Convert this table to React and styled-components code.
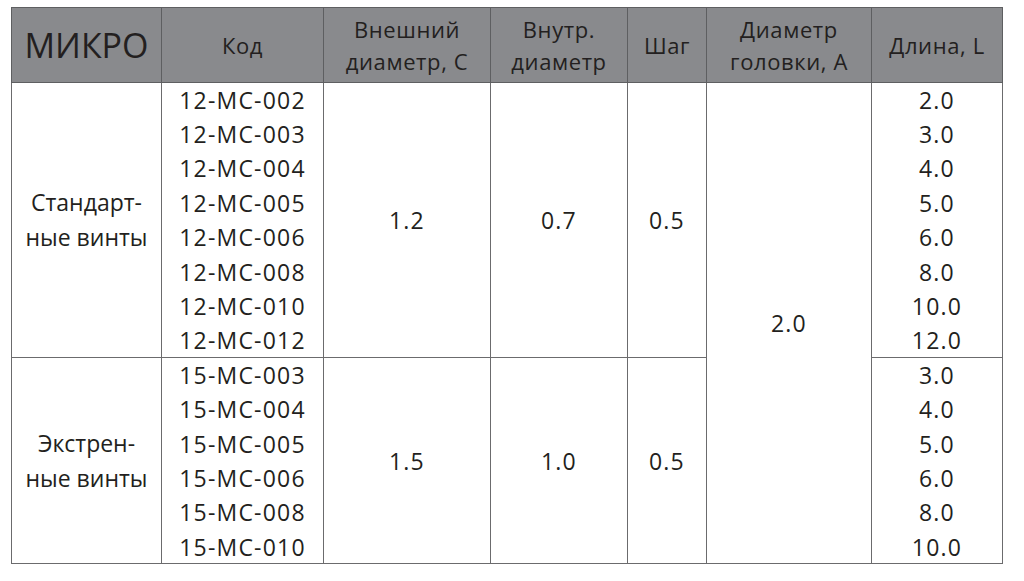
import React from 'react';
import styled, { createGlobalStyle, css } from 'styled-components';

const GlobalStyle = createGlobalStyle`
  html, body {
    margin: 0;
    padding: 0;
    background: #ffffff;
  }
  body {
    font-family: "Open Sans", "Liberation Sans", sans-serif;
    color: #231f20;
  }
`;

const Page = styled.div`
  padding: 7px 0 0 11px;
`;

const Table = styled.table`
  border-collapse: collapse;
  table-layout: fixed;
  width: 991px;
  border: 1.5px solid #6b6b6d;
`;

const HeadCell = styled.th`
  height: 74px;
  padding: 0;
  background: #898a8d;
  border: 1.2px solid #5e5f61;
  font-weight: 400;
  font-size: 22px;
  letter-spacing: 0.6px;
  line-height: 32px;
  text-align: center;
  vertical-align: middle;
  color: #231f20;
  ${(p) =>
    p.big &&
    css`
      font-size: 34px;
      letter-spacing: 0;
      line-height: 36px;
    `}
`;

const Row = styled.tr`
  height: 34.4px;
`;

const Cell = styled.td`
  padding: 0;
  font-size: 23px;
  letter-spacing: ${(p) => (p.text ? '0' : '1.2px')};
  line-height: ${(p) => (p.text ? '35px' : '28px')};
  text-align: center;
  vertical-align: middle;
  border-left: 1.2px solid #6b6b6d;
  border-right: 1.2px solid #6b6b6d;
  ${(p) =>
    p.top &&
    css`
      border-top: 1.2px solid #6b6b6d;
    `}
`;

const columns = [150, 162, 167, 137, 79, 165, 131];

const groups = [
  {
    label: ['Стандарт-', 'ные винты'],
    outer: '1.2',
    inner: '0.7',
    pitch: '0.5',
    codes: ['002', '003', '004', '005', '006', '008', '010', '012'],
    prefix: '12-MC-',
  },
  {
    label: ['Экстрен-', 'ные винты'],
    outer: '1.5',
    inner: '1.0',
    pitch: '0.5',
    codes: ['003', '004', '005', '006', '008', '010'],
    prefix: '15-MC-',
  },
];

const totalRows = groups.reduce((n, g) => n + g.codes.length, 0);

const App = () => (
  <>
    <GlobalStyle />
    <Page>
      <Table>
        <colgroup>
          {columns.map((w, i) => (
            <col key={i} style={{ width: w }} />
          ))}
        </colgroup>
        <thead>
          <tr>
            <HeadCell big>МИКРО</HeadCell>
            <HeadCell>Код</HeadCell>
            <HeadCell>
              Внешний
              <br />
              диаметр, C
            </HeadCell>
            <HeadCell>
              Внутр.
              <br />
              диаметр
            </HeadCell>
            <HeadCell>Шаг</HeadCell>
            <HeadCell>
              Диаметр
              <br />
              головки, A
            </HeadCell>
            <HeadCell>Длина, L</HeadCell>
          </tr>
        </thead>
        <tbody>
          {groups.map((g, gi) =>
            g.codes.map((c, i) => {
              const first = i === 0;
              const n = g.codes.length;
              return (
                <Row key={`${gi}-${c}`}>
                  {first && (
                    <Cell rowSpan={n} top text>
                      {g.label[0]}
                      <br />
                      {g.label[1]}
                    </Cell>
                  )}
                  <Cell top={first}>
                    {g.prefix}
                    {c}
                  </Cell>
                  {first && (
                    <>
                      <Cell rowSpan={n} top>
                        {g.outer}
                      </Cell>
                      <Cell rowSpan={n} top>
                        {g.inner}
                      </Cell>
                      <Cell rowSpan={n} top>
                        {g.pitch}
                      </Cell>
                    </>
                  )}
                  {gi === 0 && first && (
                    <Cell rowSpan={totalRows} top>
                      2.0
                    </Cell>
                  )}
                  <Cell top={first}>{parseInt(c, 10).toFixed(1)}</Cell>
                </Row>
              );
            })
          )}
        </tbody>
      </Table>
    </Page>
  </>
);

export default App;
